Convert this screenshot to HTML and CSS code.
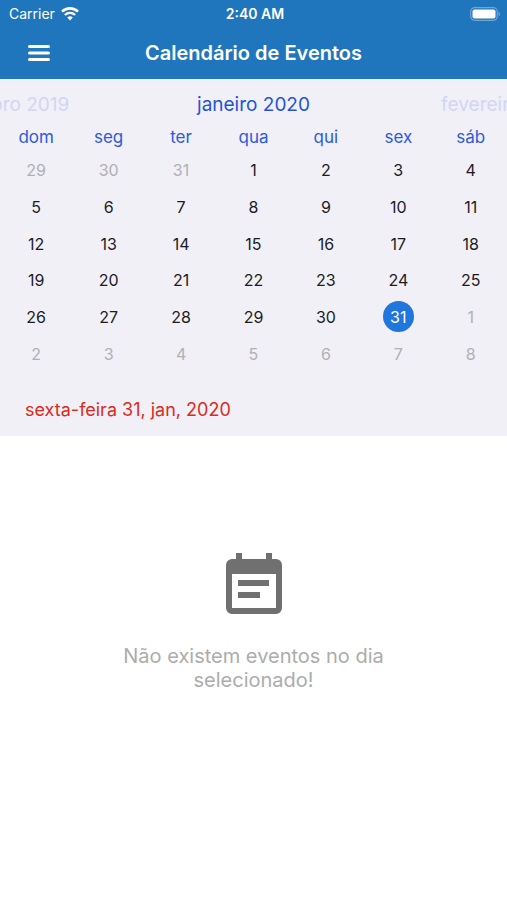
FILE: index.html
```html
<!DOCTYPE html>
<html lang="pt">
<head>
    <meta charset="UTF-8">
    <meta name="viewport" content="width=device-width, initial-scale=1">
    <title>Calendário de Eventos</title>
    <link rel="stylesheet" href="styles.css">
</head>
<body>
<header class="top">
    <div class="status">
        <div class="carrier">
            <span>Carrier</span>
            <svg class="wifi" viewBox="0 0 18 14" width="18" height="14">
                <path d="M1 4.6a11.6 11.6 0 0 1 16 0" fill="none" stroke="#fff" stroke-width="2.6"/>
                <path d="M3.9 8a7.3 7.3 0 0 1 10.2 0" fill="none" stroke="#fff" stroke-width="2.4"/>
                <path d="M9 13.4l-2.8-2.9a4 4 0 0 1 5.6 0z" fill="#fff"/>
            </svg>
        </div>
        <span class="time">2:40 AM</span>
        <svg class="battery" viewBox="0 0 31 14" width="31" height="14">
            <rect x="0.7" y="0.7" width="26.6" height="12.6" rx="4" fill="none" stroke="#6ea6d6" stroke-width="1.2"/>
            <rect x="2.5" y="2.5" width="23" height="9" rx="2" fill="#fff"/>
            <path d="M28.6 4.8c2 .8 2 3.6 0 4.4z" fill="#6ea6d6"/>
        </svg>
    </div>
    <div class="nav">
        <button class="menu" type="button" aria-label="Menu">
            <svg viewBox="0 0 22 17" width="22" height="17">
                <path d="M1.5 1.5h19M1.5 8h19M1.5 14.5h19" stroke="#fff" stroke-width="3" stroke-linecap="round"/>
            </svg>
        </button>
        <h1 class="title">Calendário de Eventos</h1>
    </div>
</header>
<section class="calendar">
    <div class="months">
        <button class="month" type="button">dezembro 2019</button>
        <h2 class="month current">janeiro 2020</h2>
        <button class="month" type="button">fevereiro 2020</button>
    </div>
    <table class="days">
        <thead>
        <tr><th>dom</th><th>seg</th><th>ter</th><th>qua</th><th>qui</th><th>sex</th><th>sáb</th></tr>
        </thead>
        <tbody>
        <tr>
            <td><button class="day other" type="button">29</button></td>
            <td><button class="day other" type="button">30</button></td>
            <td><button class="day other" type="button">31</button></td>
            <td><button class="day" type="button">1</button></td>
            <td><button class="day" type="button">2</button></td>
            <td><button class="day" type="button">3</button></td>
            <td><button class="day" type="button">4</button></td>
        </tr>
        <tr>
            <td><button class="day" type="button">5</button></td>
            <td><button class="day" type="button">6</button></td>
            <td><button class="day" type="button">7</button></td>
            <td><button class="day" type="button">8</button></td>
            <td><button class="day" type="button">9</button></td>
            <td><button class="day" type="button">10</button></td>
            <td><button class="day" type="button">11</button></td>
        </tr>
        <tr>
            <td><button class="day" type="button">12</button></td>
            <td><button class="day" type="button">13</button></td>
            <td><button class="day" type="button">14</button></td>
            <td><button class="day" type="button">15</button></td>
            <td><button class="day" type="button">16</button></td>
            <td><button class="day" type="button">17</button></td>
            <td><button class="day" type="button">18</button></td>
        </tr>
        <tr>
            <td><button class="day" type="button">19</button></td>
            <td><button class="day" type="button">20</button></td>
            <td><button class="day" type="button">21</button></td>
            <td><button class="day" type="button">22</button></td>
            <td><button class="day" type="button">23</button></td>
            <td><button class="day" type="button">24</button></td>
            <td><button class="day" type="button">25</button></td>
        </tr>
        <tr>
            <td><button class="day" type="button">26</button></td>
            <td><button class="day" type="button">27</button></td>
            <td><button class="day" type="button">28</button></td>
            <td><button class="day" type="button">29</button></td>
            <td><button class="day" type="button">30</button></td>
            <td><button class="day selected" type="button">31</button></td>
            <td><button class="day other" type="button">1</button></td>
        </tr>
        <tr>
            <td><button class="day other" type="button">2</button></td>
            <td><button class="day other" type="button">3</button></td>
            <td><button class="day other" type="button">4</button></td>
            <td><button class="day other" type="button">5</button></td>
            <td><button class="day other" type="button">6</button></td>
            <td><button class="day other" type="button">7</button></td>
            <td><button class="day other" type="button">8</button></td>
        </tr>
        </tbody>
    </table>
    <p class="date">sexta-feira 31, jan, 2020</p>
</section>
<main class="empty">
    <svg viewBox="0 0 56 62" width="56" height="62">
        <path fill="#707070" fill-rule="evenodd" d="M10 0h6v6h24V0h6v6h4a6 6 0 0 1 6 6v43a6 6 0 0 1-6 6H6a6 6 0 0 1-6-6V12a6 6 0 0 1 6-6h4zM6 21v34h44V21z"/>
        <path fill="#707070" d="M12 27h31v6H12zM12 39h22v6H12z"/>
    </svg>
    <p class="message">Não existem eventos no dia selecionado!</p>
</main>
</body>
</html>
```
FILE: styles.css
```css
*{
    margin: 0;
    padding: 0;
    box-sizing: border-box;
}
body{
    background-color: #fff;
    font-family: Inter, "Liberation Sans", sans-serif;
}
button{
    border: none;
    background: none;
    font-family: inherit;
    cursor: pointer;
}
.top{
    background-color: #2076bc;
    color: #fff;
}
.status{
    display: grid;
    grid-template-columns: 1fr auto 1fr;
    align-items: center;
    height: 27px;
    padding: 0 6px 0 9px;
    font-size: 14px;
}
.carrier{
    display: flex;
    align-items: center;
    gap: 6px;
}
.time{
    font-weight: 600;
}
.battery{
    justify-self: end;
}
.nav{
    display: grid;
    grid-template-columns: 1fr auto 1fr;
    align-items: center;
    height: 52px;
    padding: 0 20px;
}
.menu{
    justify-self: start;
    display: flex;
    padding: 8px;
}
.title{
    font-size: 20px;
    font-weight: 600;
}
.calendar{
    background-color: #f0f0f6;
    padding: 12px 0;
}
.months{
    display: flex;
    justify-content: center;
    overflow: hidden;
}
.month{
    flex: 0 0 50%;
    font-size: 19px;
    font-weight: 400;
    line-height: 28px;
    text-align: center;
    color: #d2d6f4;
}
.current{
    color: #2453d6;
}
.days{
    width: 100%;
    height: 253px;
    table-layout: fixed;
    border-collapse: collapse;
    text-align: center;
}
.days th{
    height: 33px;
    padding-top: 2px;
    font-size: 17px;
    font-weight: 400;
    color: #2f5bdb;
}
.day{
    display: block;
    width: 31px;
    height: 31px;
    margin: 0 auto;
    border-radius: 50%;
    font-size: 16px;
    color: #1c1c1e;
}
.other{
    color: #b0b0b4;
}
.selected{
    background-color: #1f76dc;
    color: #fff;
}
.date{
    margin-top: 24px;
    padding-left: 25px;
    font-size: 18px;
    line-height: 28px;
    color: #dc2a20;
}
.empty{
    display: flex;
    flex-direction: column;
    align-items: center;
    padding: 117px 100px 0;
}
.message{
    max-width: 300px;
    margin-top: 29px;
    font-size: 20px;
    line-height: 24px;
    text-align: center;
    color: #acacac;
}
```
